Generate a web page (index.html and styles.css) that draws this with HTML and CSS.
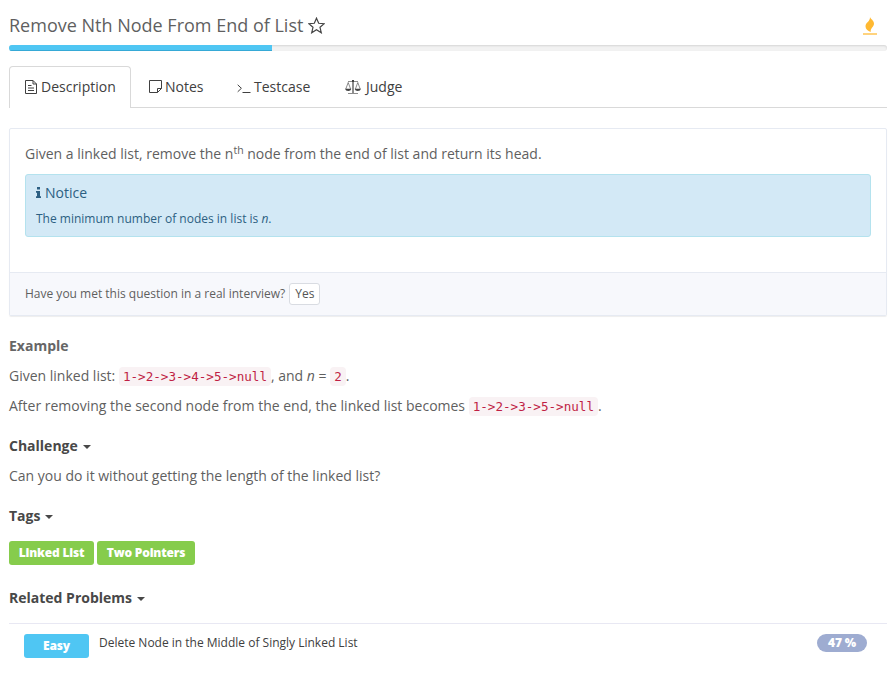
FILE: index.html
```
<!DOCTYPE html>
<html lang="en">
<head>
<meta charset="utf-8">
<title>Remove Nth Node From End of List</title>
<link rel="stylesheet" href="styles.css">
</head>
<body>
<main class="page">
  <header class="header">
    <h1 class="title">Remove Nth Node From End of List</h1>
    <svg class="star" viewBox="0 0 17 17"><path d="M8.500 1.200l2.200 5.100 5.500.4-4.200 3.600 1.300 5.500-4.800-3-4.800 3 1.300-5.500L.8 6.700l5.500-.4z"/></svg>
    <svg class="flame" viewBox="0 0 14 19"><path d="M7 0c.6 2.200 4 3.200 4 6.800 0 3-3.800 4.400-3.300 8.200C4.700 13.700 2.500 12 2.500 9.200 2.500 5.500 7.300 4.500 7 0z"/><path class="flame-base" d="M0 16.100h14v1.800H0z"/></svg>
  </header>
  <div class="progress"><div class="progress-bar"></div></div>
  <nav class="tabs">
    <a class="tab active"><svg class="icon doc" viewBox="0 0 12 14"><path d="M.5.500h7.500l3.500 3.500v9.500H.5zM8 .5V4h3.500M3 5.500h3.500M3 8h6M3 10.500h6"/></svg>Description</a>
    <a class="tab notes"><svg class="icon note" viewBox="0 0 13 13"><path d="M.5.500h12v8l-4 4h-8zM12.500 8.500h-4v4"/></svg>Notes</a>
    <a class="tab testcase"><svg class="icon term" viewBox="0 0 14 10"><path d="M.7.800l3.700 3.500L.7 7.800M5.500 8.500h8"/></svg>Testcase</a>
    <a class="tab judge"><svg class="icon scale" viewBox="0 0 16 15"><path d="M3 1.500h10M7.500 1v12M8.500 1v12M3 13.500h10M3.200 2.500L.8 9M3.200 2.500L5.600 9M12.800 2.500L10.400 9M12.800 2.500L15.200 9"/><path class="pan" d="M0 8.800h6.400Q5.800 11 3.200 11T0 8.800zM9.600 8.800H16Q15.400 11 12.800 11T9.600 8.800zM7 0h2v2H7z"/></svg>Judge</a>
  </nav>
  <section class="panel">
    <div class="panel-body">
      <p class="statement">Given a linked list, remove the n<sup>th</sup> node from the end of list and return its head.</p>
      <div class="notice">
        <h2 class="notice-title"><svg class="info" viewBox="0 0 5 11"><path d="M1 0h3v2.500H1zM0 4h4v5.200h1V11H0V9.200h1V5.800H0z"/></svg>Notice</h2>
        <p class="notice-text">The minimum number of nodes in list is <i>n</i>.</p>
      </div>
    </div>
    <footer class="panel-footer"><span>Have you met this question in a real interview?</span><button class="yes">Yes</button></footer>
  </section>
  <h2 class="heading muted">Example</h2>
  <p class="text">Given linked list: <code>1-&gt;2-&gt;3-&gt;4-&gt;5-&gt;null</code>, and <i>n</i> = <code>2</code>.</p>
  <p class="text">After removing the second node from the end, the linked list becomes <code>1-&gt;2-&gt;3-&gt;5-&gt;null</code>.</p>
  <h2 class="heading">Challenge<span class="caret"></span></h2>
  <p class="text">Can you do it without getting the length of the linked list?</p>
  <h2 class="heading">Tags<span class="caret"></span></h2>
  <div class="tags"><span class="tag">Linked List</span><span class="tag">Two Pointers</span></div>
  <h2 class="heading related-heading">Related Problems<span class="caret"></span></h2>
  <div class="related"><span class="level">Easy</span><a class="problem">Delete Node in the Middle of Singly Linked List</a><span class="rate">47 %</span></div>
</main>
</body>
</html>
```

FILE: styles.css
```
* { box-sizing: border-box; }
body {
  margin: 0;
  background: #fff;
  color: #5f5f5f;
  font: 14px/20px "Open Sans", sans-serif;
}
h1, h2, p { margin: 0; }
svg { display: block; flex: none; fill: none; stroke: currentColor; }
.page { width: 878px; margin-left: 9px; }
.header { display: flex; height: 45px; padding-top: 13px; align-items: flex-start; }
.title { font-size: 18px; line-height: 25px; font-weight: 400; white-space: nowrap; }
.star { width: 17px; height: 17px; margin: 4px 0 0 5px; color: #444; stroke-width: 1.2; }
.flame { width: 14px; height: 19px; margin: 4px 10px 0 auto; fill: #ffb932; stroke: none; }
.flame-base { fill: #ffcf70; }
.progress {
  height: 6px;
  border-radius: 3px;
  background: #f2f2f2;
  box-shadow: inset 0 1px 2px rgba(0, 0, 0, .12);
  overflow: hidden;
}
.progress-bar { width: 263px; height: 6px; background: #4fc6f3; box-shadow: inset 0 -1px 0 #36a9d6; }
.tabs {
  display: flex;
  height: 42px;
  margin-top: 15px;
  border-bottom: 1px solid #d9d9d9;
  color: #404040;
}
.tab { display: flex; height: 42px; align-items: center; padding: 0 16px 1px; white-space: nowrap; }
.tab.active {
  width: 122px;
  padding: 0 15px 1px;
  border: 1px solid #d9d9d9;
  border-bottom: 0;
  border-radius: 4px 4px 0 0;
  background: #fff;
}
.tab.notes { width: 90px; padding-left: 18px; }
.tab.testcase { width: 108px; }
.icon.doc { width: 12px; height: 14px; margin-right: 4px; }
.icon.note { width: 13px; height: 13px; margin-right: 3px; }
.icon.term { width: 14px; height: 10px; margin: 5px 3px 0 0; }
.icon.scale { width: 16px; height: 15px; margin: 1px 5px 0 0; stroke-width: .6; }
.pan { fill: currentColor; stroke: none; }
.panel {
  height: 188px;
  margin-top: 20px;
  border: 1px solid #e6eaf2;
  border-radius: 2px;
  box-shadow: 0 1px 1px rgba(0, 0, 0, .07);
}
.panel-body { height: 143px; padding: 15px 15px 0; }
.statement { height: 30px; }
sup { position: relative; top: -.5em; font-size: 10.5px; line-height: 0; vertical-align: baseline; }
.notice {
  height: 63px;
  padding: 8px 10px;
  border: 1px solid #b4e2ee;
  border-radius: 3px;
  background: #d3e9f6;
  color: #2c5f82;
}
.notice-title { display: flex; align-items: center; font-size: 14px; font-weight: 400; line-height: 20px; }
.info { width: 5px; height: 11px; margin: 0 4px 1px 0; fill: currentColor; stroke: none; }
.notice-text { margin-top: 7px; font-size: 12px; line-height: 18px; }
.panel-footer {
  display: flex;
  height: 43px;
  align-items: center;
  padding: 0 15px;
  border-top: 1px solid #e6eaf2;
  background: #f7f8fc;
  font-size: 12px;
}
.yes {
  width: 31px;
  height: 22px;
  margin-left: 4px;
  padding: 0;
  border: 1px solid #d9dce2;
  border-radius: 3px;
  background: #fff;
  color: #555;
  font: 12px/18px "Open Sans", sans-serif;
}
.heading { margin-top: 20px; color: #484848; font-size: 14px; font-weight: 700; line-height: 20px; }
.muted { color: #666; }
.text { margin-top: 10px; white-space: nowrap; }
code {
  padding: 2px 4px;
  border-radius: 4px;
  background: #f9f2f4;
  color: #c01f45;
  font: 12.6px/18px "DejaVu Sans Mono", monospace;
}
.caret {
  display: inline-block;
  margin-left: 5px;
  border: 4px solid transparent;
  border-top-color: currentColor;
  border-bottom: 0;
  vertical-align: middle;
}
.tags { display: flex; gap: 3px; margin-top: 15px; }
.tag, .level { height: 24px; border-radius: 3px; color: #fff; font-size: 12px; font-weight: 800; line-height: 23px; text-align: center; }
.tag { width: 85px; background: #86cc4c; letter-spacing: -.2px; }
.tag + .tag { width: 98px; }
.related-heading { margin-top: 23px; }
.related { display: flex; height: 46px; margin-top: 15px; padding: 10px 20px 0 15px; border-top: 1px solid #e8e8f3; }
.level { width: 65px; background: #4fc6f3; letter-spacing: -.2px; }
.problem { margin-left: 10px; color: #404040; font-size: 12px; line-height: 18px; }
.rate { width: 50px; height: 18px; margin-left: auto; border-radius: 9px; background: #9eacd1; color: #fff; font-size: 12px; font-weight: 800; line-height: 18px; text-align: center; letter-spacing: -.2px; }
```
